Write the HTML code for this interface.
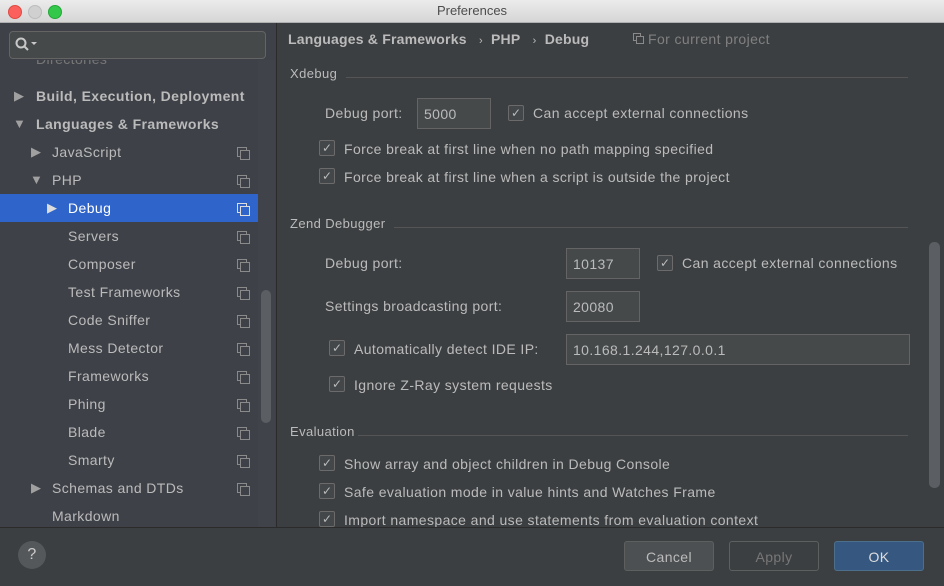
<!DOCTYPE html>
<html><head><style>
body{margin:0;width:944px;height:585px;overflow:hidden;background:#3c3f41;font-family:"Liberation Sans",sans-serif;font-size:14px;letter-spacing:0.4px;color:#bbbbbb;position:relative}
.a{position:absolute;white-space:nowrap}
.tb{left:0;top:0;width:944px;height:22px;background:linear-gradient(#ececec,#d6d6d6);border-bottom:1px solid #b0b0b0;color:#4d4d4d;font-size:13px;letter-spacing:0;text-align:center;line-height:22px}
.dot{top:5px;width:12px;height:12px;border-radius:50%}
.side{left:0;top:23px;width:276px;height:504px;background:#3e4147;border-right:1px solid #2b2b2b}
.row{left:0;width:258px;height:28px;line-height:28px}
.tri{font-size:13px;color:#a0a0a0}
.ic{width:8px;height:8px;border:1px solid #8a8a8a;position:absolute}
.cb{width:14px;height:14px;border:1px solid #6b6b6b;background:#43474a;border-radius:2px;position:absolute;color:#bbb;font-size:12px;letter-spacing:0;line-height:14px;text-align:center}
.in{background:#45494a;border:1px solid #646464;height:28px;line-height:28px;padding-left:6px;box-sizing:border-box;position:absolute}
.hr{height:1px;background:#555;position:absolute}
.btn{top:541px;width:90px;height:30px;border-radius:3px;border:1px solid #5e6060;background:#4c5052;text-align:center;line-height:30px;box-sizing:border-box}
</style></head><body>
<div class="a tb">Preferences</div>
<div class="a dot" style="left:8px;background:#fc605c;border:1px solid #de4a43"></div>
<div class="a dot" style="left:28px;background:#d0d0d0;border:1px solid #bcbcbc"></div>
<div class="a dot" style="left:48px;background:#34c84a;border:1px solid #22a838"></div>
<div class="a side"></div>
<div class="a" style="left:258px;top:60px;width:17px;height:467px;background:#404349"></div>
<div class="a" style="left:261px;top:290px;width:10px;height:133px;background:#5b5e63;border-radius:5px"></div>
<div class="a" style="left:9px;top:31px;width:257px;height:28px;border:1px solid #646464;background:#45494a;border-radius:4px;box-sizing:border-box"></div>
<svg class="a" style="left:14px;top:36px" width="26" height="18"><circle cx="7" cy="7" r="4.5" fill="none" stroke="#c8c8c8" stroke-width="2"/><path d="M10 10l4 4" stroke="#c8c8c8" stroke-width="2"/><path d="M17 6h6l-3 3z" fill="#c8c8c8"/></svg>
<div class="a" style="left:0;top:60px;width:258px;height:17px;overflow:hidden"><div class="a" style="left:36px;top:-9px;color:#777">Directories</div></div>
<div class="a row" style="top:82px"><span class="a tri" style="left:14px">▶</span><b class="a" style="left:36px">Build, Execution, Deployment</b></div>
<div class="a row" style="top:110px"><span class="a tri" style="left:13px">▼</span><b class="a" style="left:36px">Languages &amp; Frameworks</b></div>
<div class="a row" style="top:138px"><span class="a tri" style="left:31px">▶</span><span class="a" style="left:52px">JavaScript</span></div>
<div class="a row" style="top:166px"><span class="a tri" style="left:30px">▼</span><span class="a" style="left:52px">PHP</span></div>
<div class="a row" style="top:194px;background:#2f65ca;color:#fff"><span class="a tri" style="left:47px;color:#ddd">▶</span><span class="a" style="left:68px">Debug</span></div>
<div class="a row" style="top:222px"><span class="a" style="left:68px">Servers</span></div>
<div class="a row" style="top:250px"><span class="a" style="left:68px">Composer</span></div>
<div class="a row" style="top:278px"><span class="a" style="left:68px">Test Frameworks</span></div>
<div class="a row" style="top:306px"><span class="a" style="left:68px">Code Sniffer</span></div>
<div class="a row" style="top:334px"><span class="a" style="left:68px">Mess Detector</span></div>
<div class="a row" style="top:362px"><span class="a" style="left:68px">Frameworks</span></div>
<div class="a row" style="top:390px"><span class="a" style="left:68px">Phing</span></div>
<div class="a row" style="top:418px"><span class="a" style="left:68px">Blade</span></div>
<div class="a row" style="top:446px"><span class="a" style="left:68px">Smarty</span></div>
<div class="a row" style="top:474px"><span class="a tri" style="left:31px">▶</span><span class="a" style="left:52px">Schemas and DTDs</span></div>
<div class="a row" style="top:502px"><span class="a" style="left:52px">Markdown</span></div>
<script>
[152,180,208,236,264,292,320,348,376,404,432,460,488].forEach(function(y){document.write('<div class="ic" style="left:237px;top:'+(y-5)+'px;border-color:'+(y==208?'#ddd':'#8a8a8a')+'"></div><div class="ic" style="left:240px;top:'+(y-2)+'px;background:'+(y==208?'#2f65ca':'#3e4147')+';border-color:'+(y==208?'#ddd':'#8a8a8a')+'"></div>')});
</script>
<b class="a" style="left:288px;top:31px;letter-spacing:0.2px">Languages &amp; Frameworks&nbsp;&nbsp; <span style="font-weight:normal;font-size:11px">›</span> &nbsp;PHP&nbsp;&nbsp; <span style="font-weight:normal;font-size:11px">›</span> &nbsp;Debug</b>
<div class="a" style="left:648px;top:31px;color:#808080">For current project</div>
<div class="ic" style="left:633px;top:33px;width:6px;height:6px"></div><div class="ic" style="left:636px;top:36px;width:6px;height:6px;background:#3c3f41"></div>
<div class="a" style="left:290px;top:66px;font-size:13px">Xdebug</div><div class="hr" style="left:346px;top:77px;width:562px"></div>
<div class="a" style="left:325px;top:105px">Debug port:</div>
<div class="in" style="left:417px;top:98px;width:74px;height:31px;line-height:30px">5000</div>
<div class="cb" style="left:508px;top:105px">✓</div><div class="a" style="left:533px;top:105px">Can accept external connections</div>
<div class="cb" style="left:319px;top:140px">✓</div><div class="a" style="left:344px;top:141px">Force break at first line when no path mapping specified</div>
<div class="cb" style="left:319px;top:168px">✓</div><div class="a" style="left:344px;top:169px">Force break at first line when a script is outside the project</div>
<div class="a" style="left:290px;top:216px;font-size:13px">Zend Debugger</div><div class="hr" style="left:394px;top:227px;width:514px"></div>
<div class="a" style="left:325px;top:255px">Debug port:</div>
<div class="in" style="left:566px;top:248px;width:74px;height:31px;line-height:30px">10137</div>
<div class="cb" style="left:657px;top:255px">✓</div><div class="a" style="left:682px;top:255px">Can accept external connections</div>
<div class="a" style="left:325px;top:298px">Settings broadcasting port:</div>
<div class="in" style="left:566px;top:291px;width:74px;height:31px;line-height:30px">20080</div>
<div class="cb" style="left:329px;top:340px">✓</div><div class="a" style="left:354px;top:341px">Automatically detect IDE IP:</div>
<div class="in" style="left:566px;top:334px;width:344px;height:31px;line-height:30px">10.168.1.244,127.0.0.1</div>
<div class="cb" style="left:329px;top:376px">✓</div><div class="a" style="left:354px;top:377px">Ignore Z-Ray system requests</div>
<div class="a" style="left:290px;top:424px;font-size:13px">Evaluation</div><div class="hr" style="left:358px;top:435px;width:550px"></div>
<div class="cb" style="left:319px;top:455px">✓</div><div class="a" style="left:344px;top:456px">Show array and object children in Debug Console</div>
<div class="cb" style="left:319px;top:483px">✓</div><div class="a" style="left:344px;top:484px">Safe evaluation mode in value hints and Watches Frame</div>
<div class="cb" style="left:319px;top:511px">✓</div><div class="a" style="left:344px;top:512px">Import namespace and use statements from evaluation context</div>
<div class="a" style="left:929px;top:242px;width:11px;height:246px;background:#5b5e63;border-radius:5px"></div>
<div class="a" style="left:0;top:527px;width:944px;height:58px;background:#3c3f41;border-top:1px solid #2b2b2b"></div>
<div class="a" style="left:18px;top:541px;width:28px;height:28px;border-radius:50%;background:#55585a;color:#ccc;text-align:center;line-height:28px;font-size:16px">?</div>
<div class="a btn" style="left:624px">Cancel</div>
<div class="a btn" style="left:729px;background:#3c3f41;color:#777">Apply</div>
<div class="a btn" style="left:834px;background:#365880;border-color:#4c708c;color:#ddd">OK</div>
</body></html>
